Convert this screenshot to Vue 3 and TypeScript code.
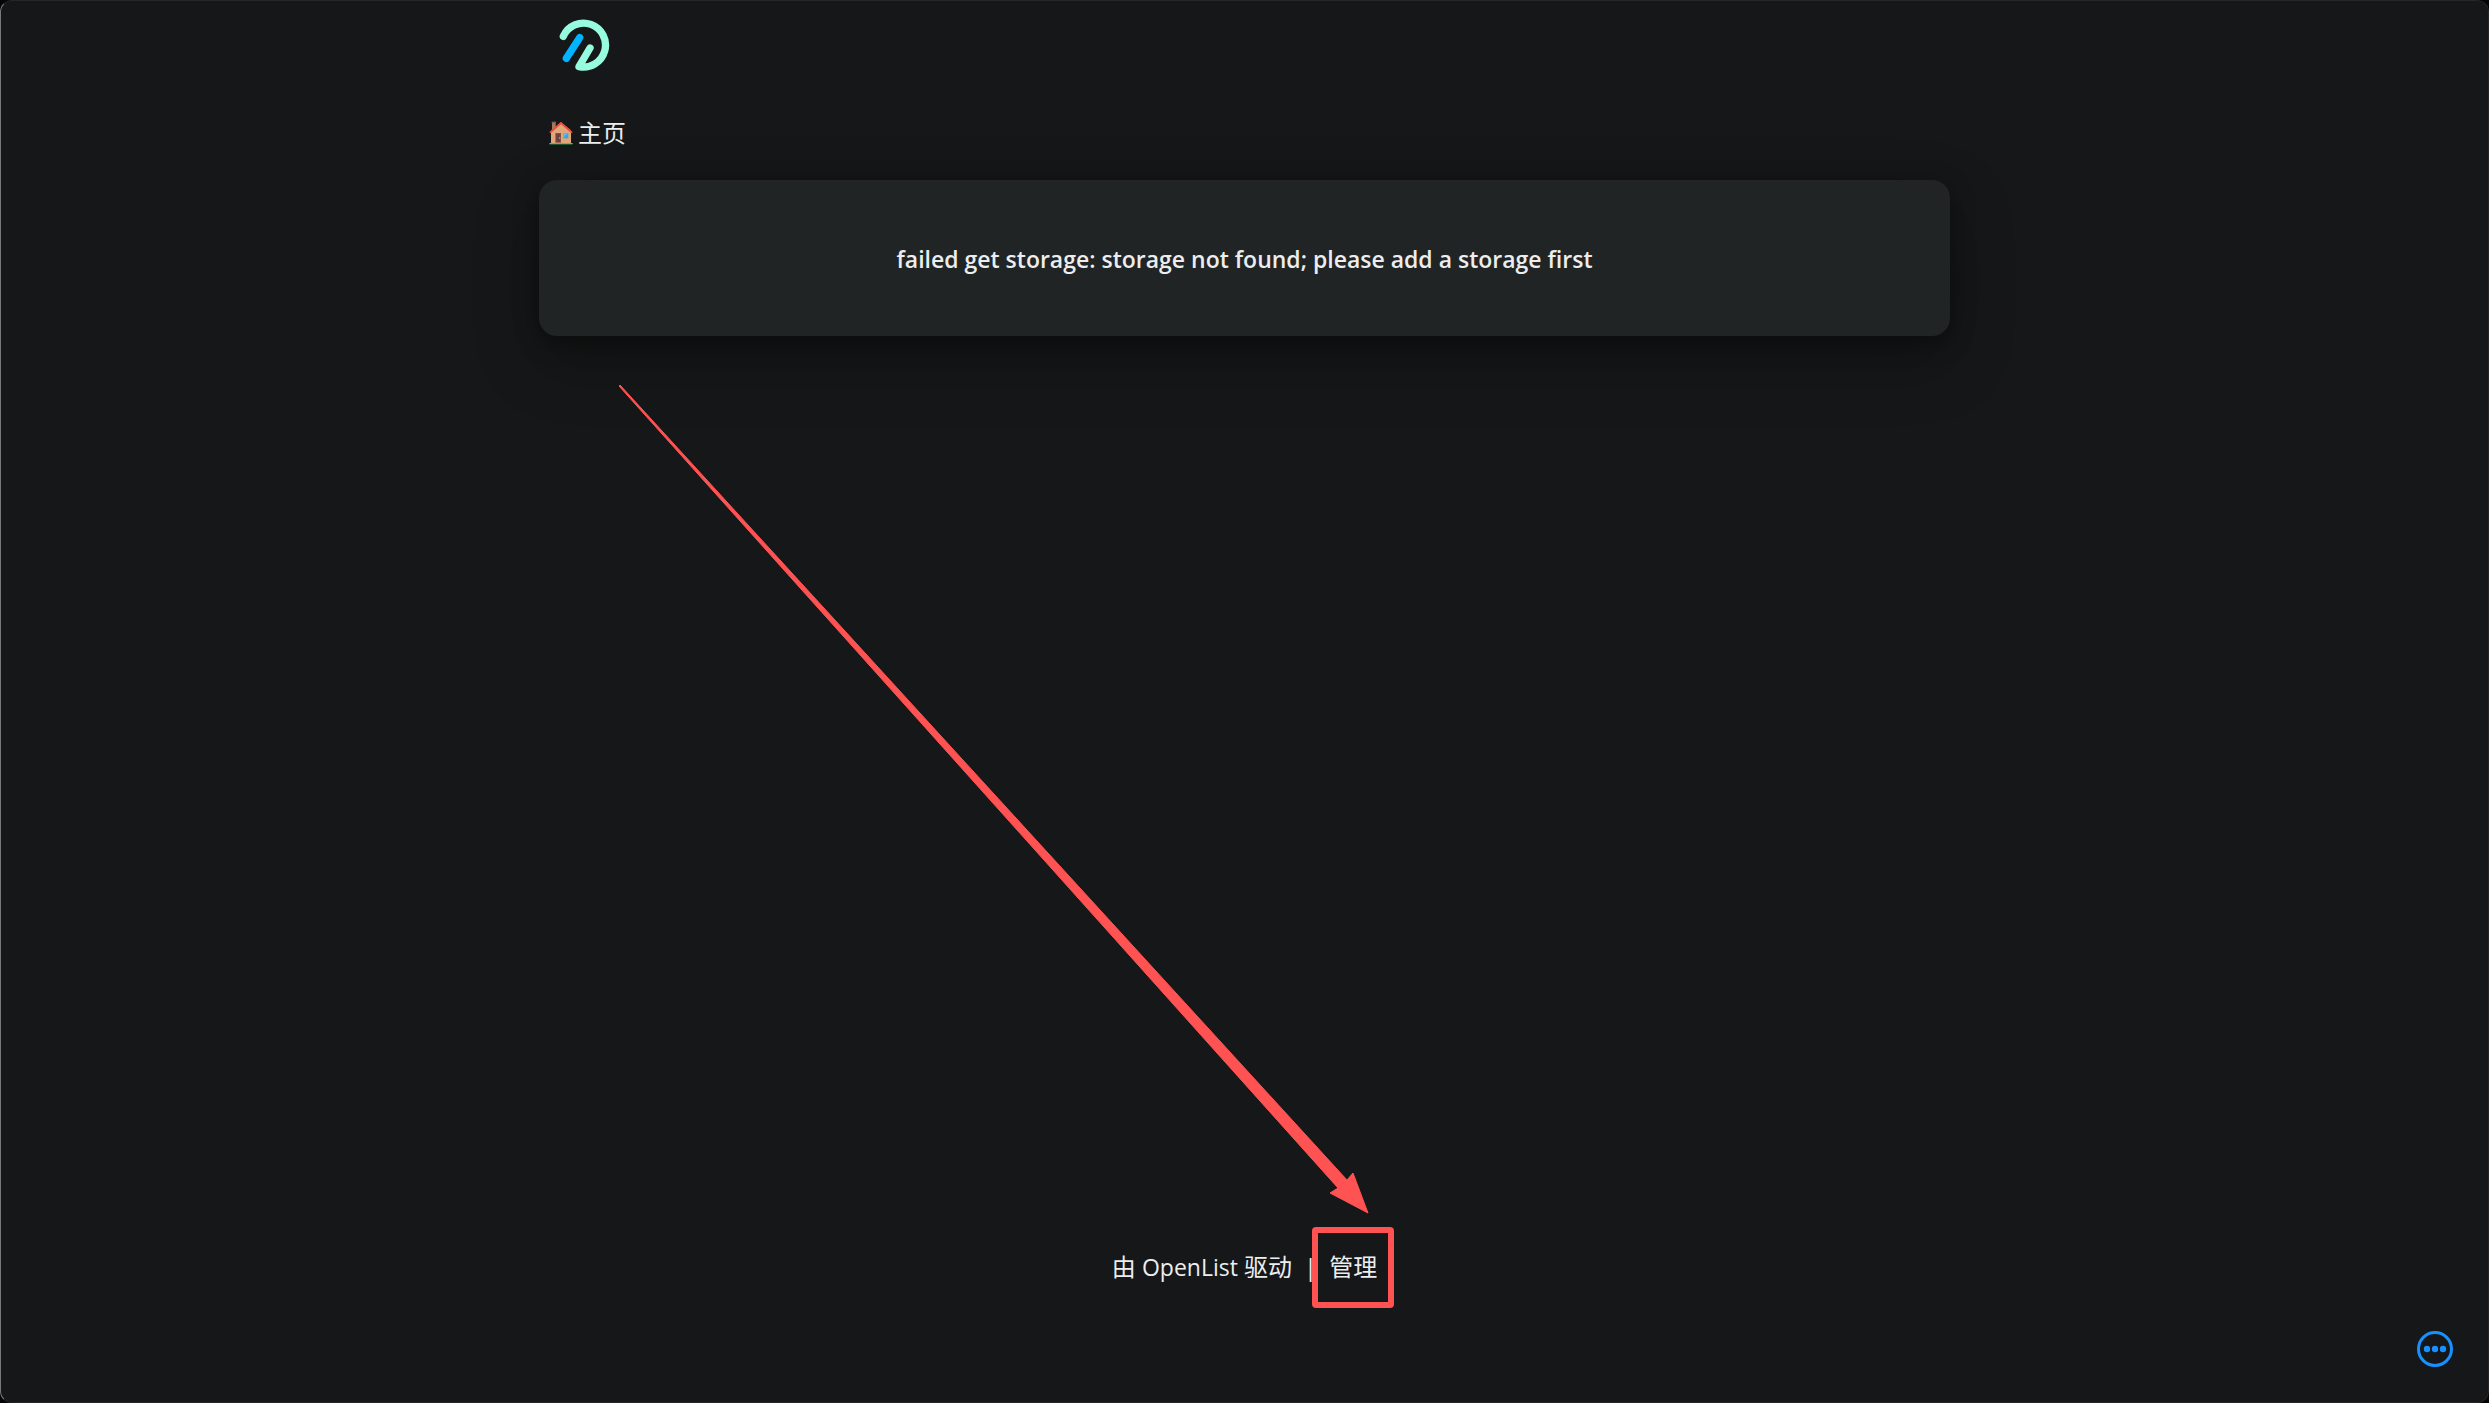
<script setup lang="ts">
import { ref } from 'vue'

const message = ref('failed get storage: storage not found; please add a storage first')
const dots: number[] = [10, 18, 26]
</script>

<template>
  <div class="page">
    <div class="shell">
      <header class="header">
        <a href="#" class="logo" aria-label="OpenList">
          <svg viewBox="52 52 162 162" width="54" height="54" fill="none" stroke-width="22" stroke-linecap="round" stroke-linejoin="round">
            <path d="M71 110 A66 66 0 1 1 118 201 L151 145" stroke="#97fbe0" />
            <path d="M120 114 L80 176" stroke="#00b4ff" />
          </svg>
        </a>
      </header>

      <nav class="crumbs">
        <a href="#" class="crumb">
          <svg viewBox="0 0 72 72" width="24" height="24" aria-hidden="true">
            <path d="M9 5h11v20H9z" fill="#a9785c" />
            <path d="M8 2h13v5H8z" fill="#8a5f4c" />
            <path d="M6 32 36 6l30 26v35H6z" fill="#e0a878" />
            <path d="M6 36 36 10l30 26v-8L36 4 6 28z" fill="#c98257" />
            <path d="M1 33 36 2l35 31-3 4L36 9 4 37z" fill="#f0473e" />
            <path d="M19 36h17v29H19z" fill="#874f4b" />
            <path d="M22 39h11v24H22z" fill="#74403f" />
            <circle cx="32" cy="51" r="2" fill="#e8b86a" />
            <path d="M42 36h16v16H42z" fill="#36a5e8" />
            <path d="M42 36h16L42 52z" fill="#4dbbf5" />
            <path d="M1 66h70v4H1z" fill="#32d36b" />
          </svg>
          <span>主页</span>
        </a>
      </nav>

      <main class="card">
        <h2 class="message">{{ message }}</h2>
      </main>

      <footer class="footer">
        <a href="#">由 <span class="brand">OpenList</span> 驱动</a>
        <span class="bar">|</span>
        <a href="#" class="manage">管理</a>
      </footer>

      <svg class="arrow" viewBox="0 0 750 830" width="750" height="830" aria-hidden="true">
        <path d="M0 1 L1 0 L728 795 L734 788 L749 828 L711 808 L719 803 Z" fill="#ff5252" stroke="#ff5252" stroke-linejoin="round" />
      </svg>
    </div>

    <button class="more" type="button" aria-label="更多">
      <svg viewBox="0 0 36 36" width="36" height="36">
        <circle cx="18" cy="18" r="16.5" fill="none" stroke="#1890ff" stroke-width="3" />
        <circle v-for="x in dots" :key="x" :cx="x" cy="18" r="3.2" fill="#1890ff" />
      </svg>
    </button>
  </div>
</template>

<style>
body {
  margin: 0;
  background: #050505;
}
</style>

<style scoped>
.page {
  position: relative;
  box-sizing: border-box;
  min-height: 100vh;
  display: flex;
  flex-direction: column;
  align-items: center;
  border: 1px solid #242627;
  border-left-color: #77797a;
  border-radius: 12px;
  background: #151718;
  color: #ecedee;
  font-family: "Open Sans", "Noto Sans CJK SC", sans-serif;
  font-size: 24px;
  line-height: 36px;
}

a {
  color: inherit;
  text-decoration: none;
}

.shell {
  position: relative;
  width: calc(100% - 48px);
  max-width: 1411px;
  flex: 1;
  display: flex;
  flex-direction: column;
}

.header {
  display: flex;
  align-items: center;
  height: 86px;
  padding: 0 18px;
}

.logo,
.logo svg {
  display: block;
}

.crumbs {
  display: flex;
  padding: 28px 10px 29px;
}

.crumb {
  display: flex;
  align-items: center;
  gap: 5px;
}

.card {
  display: flex;
  justify-content: center;
  padding: 61px 24px 59px;
  border-radius: 18px;
  background: #202425;
  box-shadow: 0 24px 64px rgba(0, 0, 0, 0.25), 0 6px 24px rgba(0, 0, 0, 0.35);
}

.message {
  margin: 0;
  font-size: 23px;
  font-weight: 600;
}

.footer {
  display: flex;
  justify-content: center;
  gap: 12px;
  margin-top: auto;
  padding-bottom: 117px;
}

.brand {
  font-size: 23px;
}

.manage {
  position: relative;
}

.manage::after {
  content: "";
  position: absolute;
  inset: -22px -17px -23px;
  border: 6px solid #ff5252;
  border-radius: 4px;
}

.arrow {
  position: absolute;
  left: 80px;
  top: 384px;
  pointer-events: none;
}

.more {
  position: absolute;
  right: 35px;
  bottom: 35px;
  padding: 0;
  border: 0;
  background: none;
  cursor: pointer;
}

.more svg {
  display: block;
}
</style>
